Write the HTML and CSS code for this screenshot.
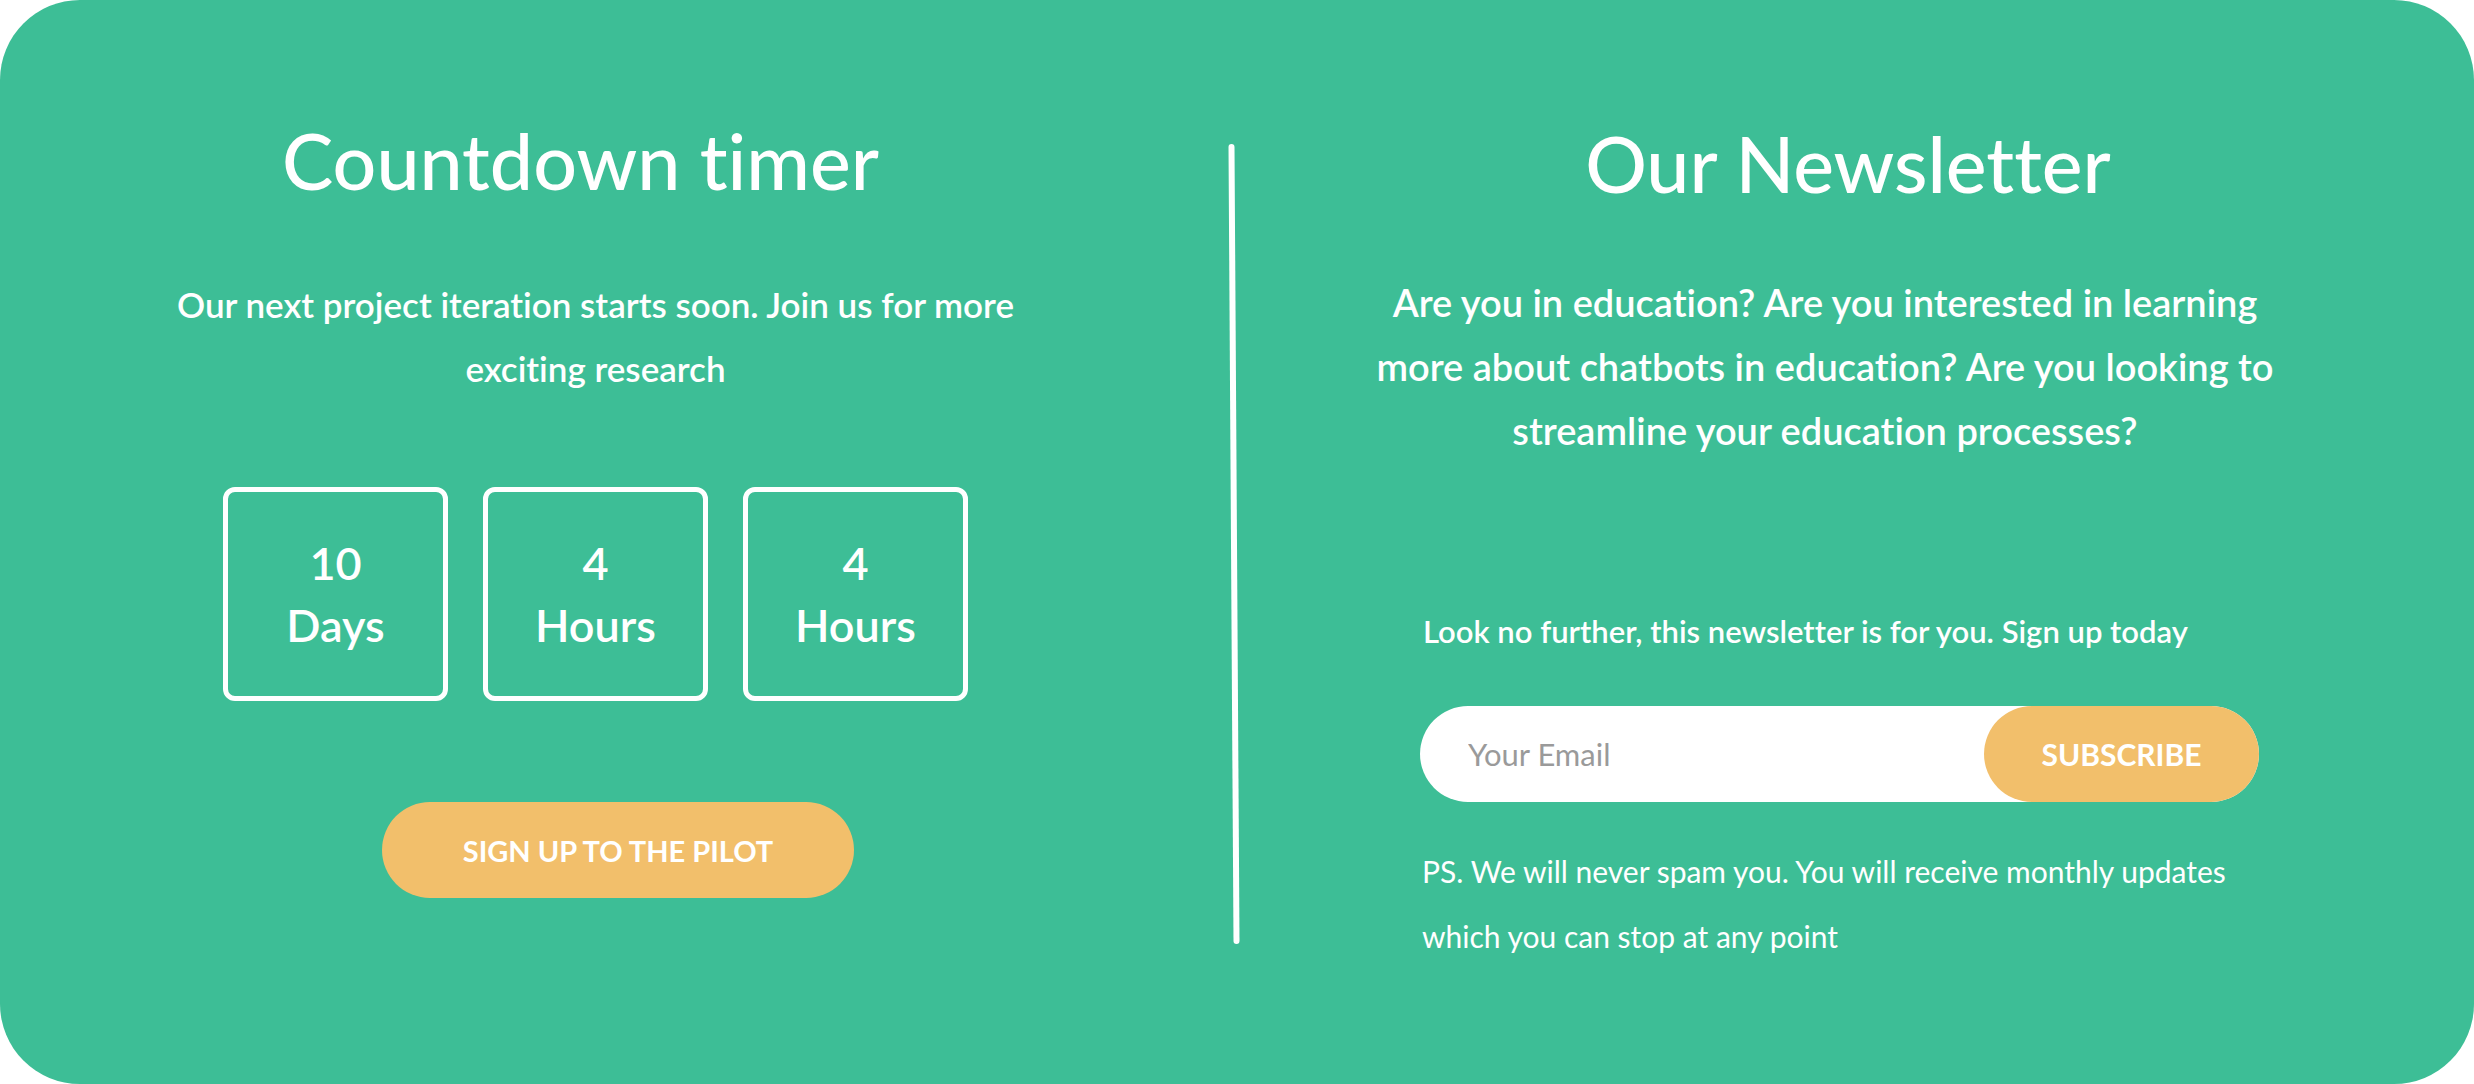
FILE: index.html
```html
<!DOCTYPE html>
<html lang="en">
<head>
<meta charset="utf-8">
<title>Countdown &amp; Newsletter</title>
<link rel="stylesheet" href="styles.css">
</head>
<body>
<section class="card">
  <div class="col col-left">
    <h1 class="title title-left">Countdown timer</h1>
    <p class="lead lead-left">Our next project iteration starts soon. Join us for more<br>exciting research</p>
    <div class="timer">
      <div class="tbox"><span class="tnum">10</span><span class="tunit">Days</span></div>
      <div class="tbox"><span class="tnum">4</span><span class="tunit">Hours</span></div>
      <div class="tbox"><span class="tnum">4</span><span class="tunit">Hours</span></div>
    </div>
    <a class="btn btn-pilot" href="#">SIGN UP TO THE PILOT</a>
  </div>
  <div class="divider"></div>
  <div class="col col-right">
    <h2 class="title title-right">Our Newsletter</h2>
    <p class="lead lead-right">Are you in education? Are you interested in learning<br>more about chatbots in education? Are you looking to<br>streamline your education processes?</p>
    <p class="note">Look no further, this newsletter is for you. Sign up today</p>
    <form class="subscribe" onsubmit="return false">
      <input class="email" type="email" placeholder="Your Email">
      <button class="btn btn-sub" type="submit">SUBSCRIBE</button>
    </form>
    <p class="ps">PS. We will never spam you. You will receive monthly updates<br>which you can stop at any point</p>
  </div>
</section>
</body>
</html>
```

FILE: styles.css
```css
* { box-sizing: border-box; }
html, body { margin: 0; padding: 0; background: #ffffff; }
body {
  font-family: Lato, "Open Sans", "Noto Sans", sans-serif;
  color: #ffffff;
  font-variant-ligatures: none;
}

.card {
  width: 2474px;
  height: 1084px;
  background: #3dbe96;
  border-radius: 80px;
  display: flex;
  overflow: hidden;
}

.col { display: flex; flex-direction: column; align-items: center; padding-top: 122px; }
.col-left { width: 1231px; padding-right: 40px; }
.col-right { flex: 1; padding-left: 183px; padding-right: 215px; align-items: stretch; }

.divider {
  width: 6px;
  height: 800px;
  margin-top: 144px;
  background: #ffffff;
  border-radius: 3px;
  transform: rotate(-0.36deg);
}

.title {
  margin: 0;
  font-size: 77px;
  line-height: 77px;
  font-weight: 500;
  white-space: nowrap;
}
.title-left { margin-right: 30px; }
.title-right { text-align: center; margin-left: 17px; margin-top: 3px; }

.lead {
  margin: 73px 0 0;
  font-size: 35px;
  line-height: 64px;
  font-weight: 600;
  text-align: center;
  white-space: nowrap;
}
.lead-right { margin: 68px -51px 0 -80px; font-size: 38px; }

.timer { display: flex; gap: 35px; margin-top: 87px; }
.tbox {
  width: 225px;
  height: 214px;
  border: 5px solid #ffffff;
  border-radius: 12px;
  display: flex;
  flex-direction: column;
  align-items: center;
  justify-content: center;
  font-size: 45px;
  line-height: 62px;
  font-weight: 600;
}

.btn {
  display: flex;
  align-items: center;
  justify-content: center;
  background: #f2bf6b;
  color: #ffffff;
  border: 0;
  border-radius: 48px;
  font-family: inherit;
  font-weight: 700;
  text-decoration: none;
  cursor: pointer;
}
.btn-pilot {
  width: 472px;
  height: 96px;
  margin-top: 101px;
  margin-left: 45px;
  font-size: 29px;
}

.note {
  margin: 149px 0 0 3px;
  font-size: 31px;
  line-height: 40px;
  font-weight: 600;
  white-space: nowrap;
}

.subscribe {
  display: flex;
  height: 96px;
  margin-top: 55px;
  background: #ffffff;
  border-radius: 48px;
}
.email {
  flex: 1;
  min-width: 0;
  border: 0;
  outline: none;
  background: transparent;
  padding: 0 0 0 48px;
  font-family: inherit;
  font-size: 31px;
  color: #555555;
}
.email::placeholder { color: #9a9a9a; }
.btn-sub {
  width: 275px;
  height: 96px;
  font-size: 30px;
}

.ps {
  margin: 37px 0 0 2px;
  font-size: 30px;
  line-height: 65px;
  font-weight: 400;
  white-space: nowrap;
}
```
